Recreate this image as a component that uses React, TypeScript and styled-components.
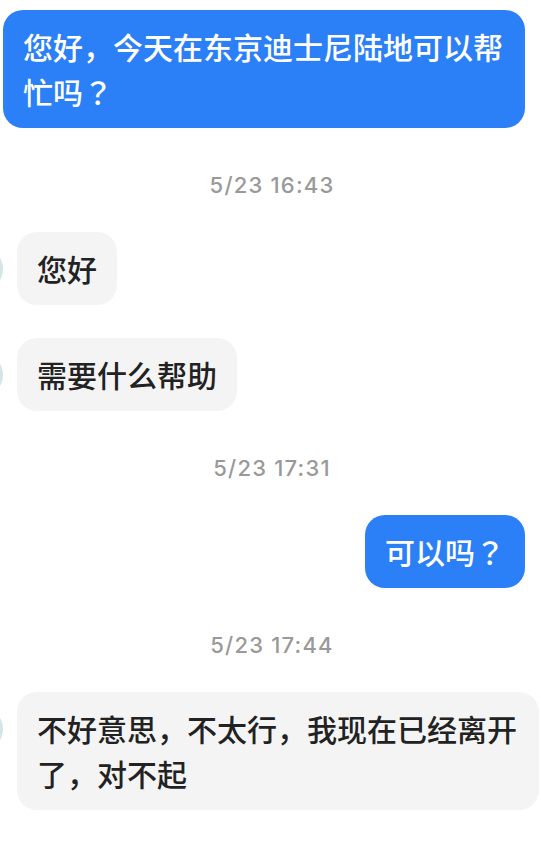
import styled, { createGlobalStyle } from 'styled-components'

const GlobalStyle = createGlobalStyle`
  html, body {
    margin: 0;
    padding: 0;
    background: #ffffff;
  }
  body {
    font-family: "Noto Sans CJK SC", "Noto Sans", sans-serif;
    overflow: hidden;
  }
`

const ChatContainer = styled.main`
  width: 541px;
  min-height: 842px;
  display: flex;
  flex-direction: column;
  padding: 10px 16px 0 3px;
  box-sizing: border-box;
  overflow: hidden;
`

const Row = styled.div<{ $mine?: boolean }>`
  display: flex;
  align-items: flex-start;
  justify-content: ${p => (p.$mine ? 'flex-end' : 'flex-start')};
  gap: 14px;
  margin-left: ${p => (p.$mine ? '0' : '-44px')};
  margin-right: ${p => (p.$mine ? '0' : '-16px')};

  & + & {
    margin-top: 33px;
  }
`

const Avatar = styled.div`
  width: 44px;
  height: 44px;
  margin-top: 15px;
  border-radius: 50%;
  background: #d3e5e6;
  flex-shrink: 0;
`

const Bubble = styled.div<{ $mine?: boolean }>`
  max-width: 522px;
  box-sizing: border-box;
  padding: 14px 20px;
  border-radius: 20px;
  background: ${p => (p.$mine ? '#2b7ff7' : '#f4f4f4')};
  color: ${p => (p.$mine ? '#ffffff' : '#222222')};
  font-family: "Noto Sans CJK SC", sans-serif;
  font-size: 30px;
  font-weight: 500;
  line-height: 45px;
  word-break: break-all;
`

// full-width punctuation centred in its cell, as in the reference
const Punct = styled.span`
  font-family: "Noto Sans CJK TC", "Noto Sans CJK SC", sans-serif;
  line-height: 45px;
`

const Timestamp = styled.div`
  margin: 42px -16px 31px -3px;
  padding-left: 3px;
  text-align: center;
  font-family: Inter, "Noto Sans", sans-serif;
  font-size: 22px;
  font-weight: 500;
  letter-spacing: 1.2px;
  line-height: 31px;
  color: #999999;
`

type Message =
  | { kind: 'time'; text: string }
  | { kind: 'msg'; mine: boolean; text: string }

const messages: Message[] = [
  { kind: 'msg', mine: true, text: '您好，今天在东京迪士尼陆地可以帮忙吗？' },
  { kind: 'time', text: '5/23 16:43' },
  { kind: 'msg', mine: false, text: '您好' },
  { kind: 'msg', mine: false, text: '需要什么帮助' },
  { kind: 'time', text: '5/23 17:31' },
  { kind: 'msg', mine: true, text: '可以吗？' },
  { kind: 'time', text: '5/23 17:44' },
  { kind: 'msg', mine: false, text: '不好意思，不太行，我现在已经离开了，对不起' },
]

function renderText(text: string) {
  return text.split(/(？)/).map((part, i) =>
    part === '？' ? <Punct key={i}>{part}</Punct> : part
  )
}

export default function App() {
  return (
    <>
      <GlobalStyle />
      <ChatContainer>
        {messages.map((m, i) =>
          m.kind === 'time' ? (
            <Timestamp key={i}>{m.text}</Timestamp>
          ) : (
            <Row key={i} $mine={m.mine}>
              {!m.mine && <Avatar />}
              <Bubble $mine={m.mine}>{renderText(m.text)}</Bubble>
            </Row>
          )
        )}
      </ChatContainer>
    </>
  )
}
